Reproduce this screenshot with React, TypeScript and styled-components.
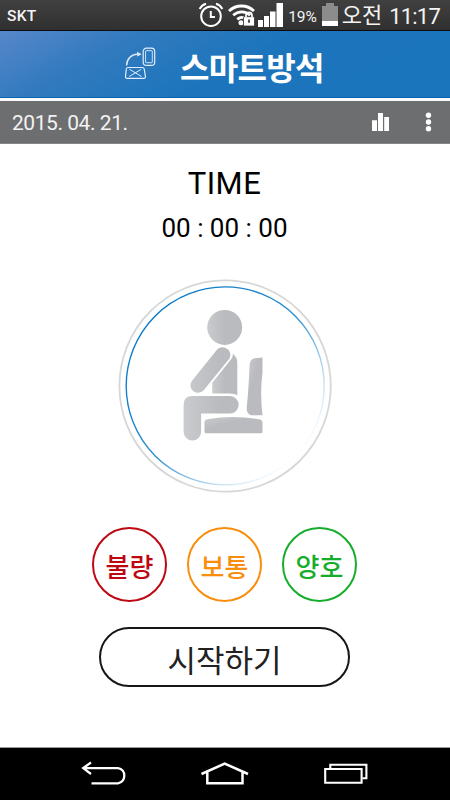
import React from "react";
import styled, { createGlobalStyle } from "styled-components";

const Global = createGlobalStyle`
  * { box-sizing: border-box; }
  html, body { margin: 0; padding: 0; background: #fff; }
  body { font-family: Roboto, "Noto Sans CJK KR", sans-serif; overflow: hidden; }
  button { font: inherit; background: none; border: 0; padding: 0; }
  svg { display: block; flex: none; }
`;

const Screen = styled.div`
  width: 450px;
  height: 800px;
  display: flex;
  flex-direction: column;
  background: #fff;
`;

const StatusBar = styled.div`
  height: 31px;
  flex: none;
  display: flex;
  align-items: center;
  padding: 0 10px 0 7px;
  background: linear-gradient(#404040, #303030);
  border-bottom: 1px solid #0a0c10;
  color: #f4f4f4;
  white-space: nowrap;
`;

const Label = styled.span<{ $size: number; $weight?: number; $left?: number; $spacing?: number; $top?: number }>`
  font-size: ${(p) => p.$size}px;
  line-height: 26px;
  font-weight: ${(p) => p.$weight ?? 400};
  margin-left: ${(p) => p.$left ?? 0}px;
  letter-spacing: ${(p) => p.$spacing ?? 0}px;
  padding-top: ${(p) => p.$top ?? 0}px;
`;

const StatusIcons = styled.div`
  display: flex;
  align-items: center;
  margin-left: auto;
`;

const IconSlot = styled.div<{ $left: number }>`
  margin-left: ${(p) => p.$left}px;
`;

const Header = styled.header`
  height: 67px;
  flex: none;
  display: flex;
  align-items: center;
  padding-left: 124px;
  background: linear-gradient(152deg, #5787ca 0%, #327abe 25%, #1c75bc 52%, #1b75bc 100%);
  border-bottom: 1px solid #0864ae;
`;

const Title = styled.h1`
  margin: 3px 0 0 24px;
  color: #fff;
  font-size: 32px;
  line-height: 40px;
  font-weight: 700;
  letter-spacing: -0.7px;
  font-family: "Noto Sans CJK KR", sans-serif;
`;

const DateBar = styled.div`
  height: 46px;
  flex: none;
  display: flex;
  align-items: center;
  padding: 0 18px 0 12px;
  border-top: 3px solid #f8fafc;
  border-bottom: 1px solid #858688;
  background: #6d6e70;
  color: #f2f2f2;
`;

const DateText = styled.span`
  font-size: 21px;
  letter-spacing: -0.45px;
  padding-top: 1px;
  flex: 1;
`;

const Main = styled.main`
  flex: 1;
  display: flex;
  flex-direction: column;
  align-items: center;
  padding-right: 1px;
  color: #000;
`;

const TimeHeading = styled.h2`
  margin: 20px 0 0;
  font-size: 31px;
  line-height: 40px;
  font-weight: 400;
  letter-spacing: 0.5px;
`;

const Timer = styled.div`
  margin-top: 6px;
  font-size: 26px;
  line-height: 36px;
`;

const Posture = styled.svg`
  margin-top: 33px;
`;

const Levels = styled.div`
  display: flex;
  gap: 20px;
  margin-top: 34px;
`;

const Level = styled.div<{ $color: string }>`
  width: 75px;
  height: 75px;
  border: 2px solid ${(p) => p.$color};
  border-radius: 50%;
  display: flex;
  align-items: center;
  justify-content: center;
  color: ${(p) => p.$color};
  font-family: "Noto Sans CJK KR", sans-serif;
  font-size: 26px;
  font-weight: 500;
  line-height: 34px;
  padding-top: 3px;
`;

const StartButton = styled.button`
  && {
    margin-top: 25px;
    width: 251px;
    height: 60px;
    border: 2px solid #151617;
    border-radius: 30px;
    color: #222;
    font-family: "Noto Sans CJK KR", sans-serif;
    font-size: 31px;
    line-height: 40px;
    padding-top: 3px;
  }
`;

const NavBar = styled.nav`
  height: 53px;
  flex: none;
  display: flex;
  align-items: flex-start;
  justify-content: space-between;
  padding: 13px 82px 0 80px;
  background: #000;
  border-top: 1px solid #999;
`;

const AlarmIcon = () => (
  <svg width="26" height="26" viewBox="0 0 26 26" fill="none" stroke="#fff" strokeWidth="2">
    <circle cx="13" cy="14.2" r="9.8" />
    <path d="M12.8 9v5.9H17M1.6 6.9C3 4.4 5.2 2.5 8 1.7M18 1.7c2.8.8 5 2.7 6.4 5.2" />
  </svg>
);

const WifiIcon = () => (
  <svg width="27" height="22" viewBox="0 0 27 22" fill="none" stroke="#fff" strokeWidth="2.8">
    <path d="M1 7.1C8 .3 19 .3 26 7.1M5.2 11.3c5-4.7 12.4-4.7 17 0M9.3 15.4c2.5-2.3 5.6-2.5 8-.8" />
    <circle cx="13" cy="18.7" r="2.5" fill="#fff" stroke="none" />
    <rect x="15.5" y="12.7" width="11" height="9.3" rx="1" fill="#fff" stroke="#373737" strokeWidth=".8" />
    <path d="M18 13.2v-1.8a3 3 0 0 1 6 0v1.8" strokeWidth="1.7" />
    <path d="M21 15.4v3.4" stroke="#333" strokeWidth="1.7" />
  </svg>
);

const SignalIcon = () => (
  <svg width="25" height="24" viewBox="0 0 25 24" fill="#fff">
    <path d="M0 17h5v7H0zM6 13h5v11H6zM12 8.5h5.5V24H12zM18.5 0H25v24h-6.5z" />
  </svg>
);

const BatteryIcon = () => (
  <svg width="16" height="24" viewBox="0 0 16 24">
    <path d="M4 0h8v3h4v16H0V3h4z" fill="#8c8c8c" />
    <path d="M0 18h16v5H0z" fill="#fff" />
  </svg>
);

const CushionLogo = () => (
  <svg width="32" height="34" viewBox="0 0 32 34" fill="none" stroke="#e2eefb" strokeWidth="1.2">
    <path d="M4 20.5h14.2q1.8 0 2 1.5l1.2 7.2q.3 2.2-1.8 2.2H3.4q-2.2 0-1.9-2L2.3 22q.2-1.5 1.7-1.5z" />
    <path d="M5.5 22.3l12 7.2M17.2 22.3l-12 7.2" strokeWidth="1" />
    <path d="M2.6 18.5C2.8 12 7 7.4 13.5 7.1" strokeWidth="1.4" />
    <path d="M13 4.7l4.6 2.6-4.3 2.2z" fill="#e2eefb" stroke="none" />
    <rect x="19.2" y="1.2" width="11.5" height="17.2" rx="3.2" />
    <rect x="21.6" y="3.7" width="6.7" height="12" rx=".5" strokeWidth=".9" />
  </svg>
);

const ChartIcon = () => (
  <svg width="18" height="18" viewBox="0 0 18 18" fill="#fff">
    <path d="M0 7.3h5V18H0zM6 0h5v18H6zM12.2 4H17v14h-4.8z" />
  </svg>
);

const MoreButton = styled.button`
  && { margin-left: 35px; }
`;

const MoreIcon = () => (
  <svg width="7" height="20" viewBox="0 0 7 20" fill="#fff">
    <circle cx="3.5" cy="3.3" r="2.7" />
    <circle cx="3.5" cy="10" r="2.7" />
    <circle cx="3.5" cy="16.7" r="2.7" />
  </svg>
);

const SeatedPerson = () => (
  <Posture width="214" height="214" viewBox="117.5 278.5 214 214">
    <defs>
      <linearGradient id="body" gradientUnits="userSpaceOnUse" x1="183" y1="0" x2="219" y2="0">
        <stop offset="0" stopColor="#cacbcd" />
        <stop offset="1" stopColor="#babbbf" />
      </linearGradient>
      <linearGradient id="head" x1="0" x2="1" y1="0" y2="0">
        <stop offset="0" stopColor="#cacbcd" />
        <stop offset=".5" stopColor="#babbbf" />
      </linearGradient>
      <linearGradient id="chair" x1="0" x2="1" y1="0" y2="1">
        <stop offset="0" stopColor="#cacbcd" />
        <stop offset=".4" stopColor="#babbbf" />
      </linearGradient>
      <linearGradient id="ring" x1=".15" y1=".15" x2=".86" y2=".86">
        <stop offset="0" stopColor="#0878c6" />
        <stop offset=".5" stopColor="#2c8ed1" />
        <stop offset=".75" stopColor="#a9d2ed" />
        <stop offset="1" stopColor="#fff" />
      </linearGradient>
    </defs>
    <circle cx="224.6" cy="385.5" r="105.7" fill="none" stroke="#d7d7d8" strokeWidth="1.8" />
    <circle cx="224.7" cy="385.4" r="99" fill="none" stroke="url(#ring)" strokeWidth="1.4" />
    <circle cx="224.2" cy="326.9" r="17.5" fill="url(#head)" />
    <path
      d="M216.2 349.4C221.5 342.8 233.2 349.3 229 358L203.4 389.5C197 396.4 185.6 388.8 191.7 380Z"
      fill="url(#body)"
    />
    <path d="M232.4 353.3Q236.8 357 236.8 362V394.8Q234 393.2 229.5 393.1H211.7V382.2L230.8 358.6Q232.5 356.2 232.4 353.3Z" fill="url(#head)" />
    <path
      d="M192 395.6H229.5a8.6 8.6 0 0 1 0 17.4H200.6V431.3a8.7 8.7 0 0 1-17.5 0V404.5q0-8.9 8.9-8.9z"
      fill="url(#body)"
    />
    <path d="M254.2 357.8l7.8-.8v15q-2.7 20 0 42.8h-11.6q-4.5-2-4.2-7.3 2-20 2.9-43.5.4-5.1 5.1-6.2z" fill="url(#chair)" />
    <path d="M206.6 418.8q26-4.8 52.5 0 2.9.8 2.9 3.1v9.4q0 1.5-1.5 1.5h-55q-1.5 0-1.5-1.5v-9.5q0-2.3 2.6-3z" fill="url(#chair)" />
  </Posture>
);

const BackIcon = () => (
  <svg width="46" height="28" viewBox="0 0 46 28" fill="none" stroke="#fff" strokeWidth="2.3">
    <path d="M11.5 22.3H38c8.4-1.2 8.4-14.2 0-15.2H4M11 1.5L3.2 7.1 11 13" />
  </svg>
);

const HomeIcon = () => (
  <svg width="50" height="28" viewBox="0 0 50 28" fill="none" stroke="#fff" strokeWidth="2.5">
    <path d="M1.5 13L24.7 2.5 48 13M7.3 11.2v11H42.5v-11" />
  </svg>
);

const RecentIcon = () => (
  <svg width="44" height="28" viewBox="0 0 44 28" fill="none" stroke="#fff" strokeWidth="2.1">
    <path d="M1.2 8h36.4v13.8H1.2z" />
    <path d="M6.3 7.5V3.8h36.1v13.5h-4" />
  </svg>
);

const levels = [
  { text: "불량", color: "#bd0812" },
  { text: "보통", color: "#f98d0c" },
  { text: "양호", color: "#16ad2c" },
];

export default function App() {
  return (
    <>
      <Global />
      <Screen>
        <StatusBar>
          <Label $size={15.5} $weight={500} $top={2} $spacing={0.3}>SKT</Label>
          <StatusIcons>
            <AlarmIcon />
            <IconSlot $left={4}><WifiIcon /></IconSlot>
            <IconSlot $left={3}><SignalIcon /></IconSlot>
            <Label $size={15.5} $left={5} $top={3} $spacing={-0.1}>19%</Label>
            <IconSlot $left={5}><BatteryIcon /></IconSlot>
            <Label $size={22} $left={4} $top={2}>오전</Label>
            <Label $size={22} $left={7} $top={3} $spacing={-0.8}>11:17</Label>
          </StatusIcons>
        </StatusBar>
        <Header>
          <CushionLogo />
          <Title>스마트방석</Title>
        </Header>
        <DateBar>
          <DateText>2015. 04. 21.</DateText>
          <button aria-label="통계"><ChartIcon /></button>
          <MoreButton aria-label="메뉴"><MoreIcon /></MoreButton>
        </DateBar>
        <Main>
          <TimeHeading>TIME</TimeHeading>
          <Timer>00 : 00 : 00</Timer>
          <SeatedPerson />
          <Levels>
            {levels.map((l) => (
              <Level key={l.text} $color={l.color}>{l.text}</Level>
            ))}
          </Levels>
          <StartButton>시작하기</StartButton>
        </Main>
        <NavBar>
          <button aria-label="뒤로"><BackIcon /></button>
          <button aria-label="홈"><HomeIcon /></button>
          <button aria-label="최근 앱"><RecentIcon /></button>
        </NavBar>
      </Screen>
    </>
  );
}
